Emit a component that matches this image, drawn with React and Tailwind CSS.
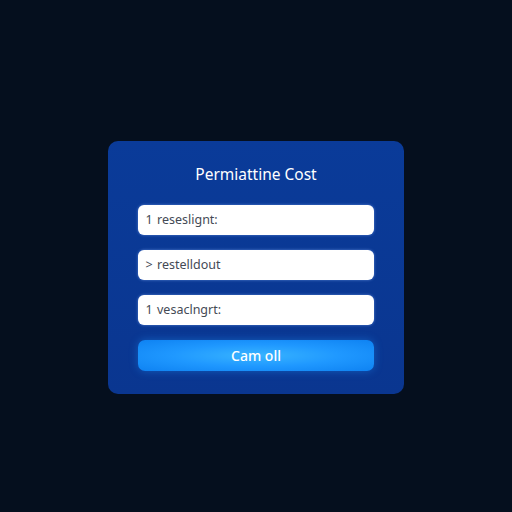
import React from "react";

const fields = [
  { mark: "1", text: "reseslignt:" },
  { mark: ">", text: "restelldout" },
  { mark: "1", text: "vesaclngrt:" },
];

export default function App() {
  return (
    <div
      className="w-[512px] h-[512px] bg-[#050f1e] flex items-center justify-center"
      style={{ fontFamily: "'Noto Sans', 'Open Sans', sans-serif" }}
    >
      <div className="w-[296px] h-[253px] mt-[23px] rounded-[10px] bg-gradient-to-b from-[#0a3b99] to-[#0a3690] flex flex-col items-center px-[30px] pt-[22px]">
        <h1 className="text-white text-[15.5px] leading-[22px] font-normal">
          Permiattine Cost
        </h1>
        <div className="w-full flex flex-col gap-[15px] mt-[20px]">
          {fields.map((f, i) => (
            <div
              key={i}
              className="h-[30px] w-full rounded-[6px] bg-white flex items-center pl-[5px] text-[12.5px] text-[#444a55] shadow-[0_0_3px_rgba(140,180,255,0.6)]"
            >
              <span className="w-[12px] text-center">{f.mark}</span>
              <span className="ml-[2px]">{f.text}</span>
            </div>
          ))}
          <button className="h-[31px] w-full rounded-[7px] bg-[radial-gradient(ellipse_at_center,#38b4ff_0%,#1f98ff_50%,#0e82f2_100%)] text-white text-[14px] font-medium shadow-[0_0_8px_rgba(30,150,255,0.4)]">
            Cam oll
          </button>
        </div>
      </div>
    </div>
  );
}
